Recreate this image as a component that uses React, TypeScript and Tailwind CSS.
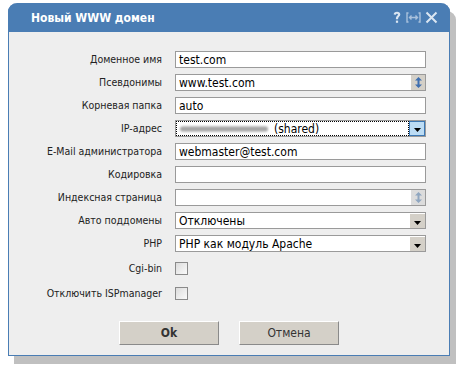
import React from "react"

const font = { fontFamily: '"DejaVu Sans Condensed", "DejaVu Sans", sans-serif' }

function Row({ label, children }: { label: string; children: React.ReactNode }) {
  return (
    <div className="flex items-center h-[17px]">
      <div className="w-[154px] text-right text-[10.5px] text-[#222] leading-none pr-[1px]">{label}</div>
      <div className="ml-[12px] w-[251px] h-[17px]">{children}</div>
    </div>
  )
}

function TextBox({ value }: { value?: string }) {
  return (
    <div className="h-full w-full border border-[#9a9a9a] bg-white flex items-center pl-[3px] text-[12px] text-black leading-none">
      {value}
    </div>
  )
}

function Spinner({ value, disabled }: { value?: string; disabled?: boolean }) {
  return (
    <div className="h-full w-full border border-[#9a9a9a] bg-white flex items-center">
      <div className="flex-1 pl-[3px] text-[12px] text-black leading-none">{value}</div>
      <div
        className={
          disabled
            ? "h-full w-[15px] bg-[#dcdcdc] border-l border-white flex items-center justify-center"
            : "h-full w-[15px] bg-[#d4d0c8] border-l border-white flex items-center justify-center"
        }
      >
        <svg width="7" height="11" viewBox="0 0 7 11">
          <path d="M3.5 0 L7 3.5 H4.5 V7.5 H7 L3.5 11 L0 7.5 H2.5 V3.5 H0 Z" fill={disabled ? "#8fa6c0" : "#3f6fb0"} />
        </svg>
      </div>
    </div>
  )
}

function Select({ children, focused }: { children?: React.ReactNode; focused?: boolean }) {
  return (
    <div className="h-full w-full border border-[#9a9a9a] bg-white flex items-center">
      <div
        className={
          focused
            ? "flex-1 h-full flex items-center pl-[3px] text-[12px] text-black leading-none border border-dotted border-black"
            : "flex-1 h-full flex items-center pl-[3px] text-[12px] text-black leading-none"
        }
      >
        {children}
      </div>
      <div
        className={
          focused
            ? "h-full w-[16px] bg-[#bcdcf4] border border-[#3c78b4] flex items-end justify-center pb-[3px]"
            : "h-full w-[16px] bg-[#d4d0c8] border-l border-t border-white border-r-[#888] border-b-[#888] flex items-end justify-center pb-[3px]"
        }
      >
        <svg width="7" height="4" viewBox="0 0 7 4">
          <path d="M0 0 H7 L3.5 4 Z" fill="#000" />
        </svg>
      </div>
    </div>
  )
}

function Check({ label }: { label: string }) {
  return (
    <div className="flex items-center h-[13px]">
      <div className="w-[154px] text-right text-[10.5px] text-[#222] leading-none pr-[1px]">{label}</div>
      <div className="ml-[12px] w-[13px] h-[13px] border border-[#8a8a8a] bg-gradient-to-br from-[#dcdcdc] to-[#fafafa]" />
    </div>
  )
}

export default function App() {
  return (
    <div className="w-[470px] h-[374px] bg-white pt-[3px] pl-[8px]" style={font}>
      <div className="w-[442px] h-[353px] rounded-t-[9px] bg-[#eeeeee] border border-t-0 border-[#4a7db4] shadow-[6px_8px_0_0_#c0c0c0] flex flex-col">
        {/* Title bar */}
        <div className="h-[29px] -mx-[1px] rounded-t-[9px] bg-[#4a7db4] flex items-center pl-[23px] pr-[12px]">
          <span className="text-white font-bold text-[12px] leading-none">Новый WWW домен</span>
          <div className="ml-auto flex items-center gap-[4px]">
            <svg width="10" height="13" viewBox="0 0 9 13">
              <path d="M1.2 3.6 C1.2 1.6 2.6 0.8 4.5 0.8 C6.5 0.8 7.8 1.9 7.8 3.5 C7.8 5.4 5.6 5.6 5.6 7.6 V8.2 H3.4 V7.4 C3.4 5.1 5.5 4.8 5.5 3.6 C5.5 3 5.1 2.7 4.5 2.7 C3.8 2.7 3.4 3.1 3.4 3.8 Z" fill="#dbe6f2" />
              <rect x="3.4" y="9.6" width="2.2" height="2.2" fill="#dbe6f2" />
            </svg>
            <svg width="15" height="13" viewBox="0 0 15 13">
              <path d="M2.5 2 H1 V11 H2.5 M12.5 2 H14 V11 H12.5" stroke="#a9c1dc" strokeWidth="1.4" fill="none" />
              <path d="M3.5 6.5 H11.5 M5.5 4.5 L3.5 6.5 L5.5 8.5 M9.5 4.5 L11.5 6.5 L9.5 8.5" stroke="#a9c1dc" strokeWidth="1.4" fill="none" />
            </svg>
            <svg width="13" height="13" viewBox="0 0 13 13">
              <path d="M1.5 1.5 L11.5 11.5 M11.5 1.5 L1.5 11.5" stroke="#dbe6f2" strokeWidth="2" />
            </svg>
          </div>
        </div>

        {/* Form */}
        <div className="flex flex-col gap-[6px] pt-[19px]">
          <Row label="Доменное имя">
            <TextBox value="test.com" />
          </Row>
          <Row label="Псевдонимы">
            <Spinner value="www.test.com" />
          </Row>
          <Row label="Корневая папка">
            <TextBox value="auto" />
          </Row>
          <Row label="IP-адрес">
            <Select focused>
              <span className="w-[88px] h-[6px] rounded-full bg-gradient-to-b from-[#c8c8c8] via-[#9a9a9a] to-[#c8c8c8] blur-[1px] mr-[6px]" />
              <span>(shared)</span>
            </Select>
          </Row>
          <Row label="E-Mail администратора">
            <TextBox value="webmaster@test.com" />
          </Row>
          <Row label="Кодировка">
            <TextBox />
          </Row>
          <Row label="Индексная страница">
            <Spinner disabled />
          </Row>
          <Row label="Авто поддомены">
            <Select>Отключены</Select>
          </Row>
          <Row label="PHP">
            <Select>PHP как модуль Apache</Select>
          </Row>
        </div>

        <div className="flex flex-col gap-[12px] pt-[10px]">
          <Check label="Cgi-bin" />
          <Check label="Отключить ISPmanager" />
        </div>

        {/* Buttons */}
        <div className="mt-auto mb-[10px] flex justify-center gap-[20px]">
          <button className="w-[100px] h-[24px] bg-[#d4d0c8] border border-t-white border-l-white border-r-[#8a8a8a] border-b-[#8a8a8a] text-[12px] font-bold text-[#333]">
            Ok
          </button>
          <button className="w-[100px] h-[24px] bg-[#d4d0c8] border border-t-white border-l-white border-r-[#8a8a8a] border-b-[#8a8a8a] text-[12px] text-[#333]">
            Отмена
          </button>
        </div>
      </div>
    </div>
  )
}
